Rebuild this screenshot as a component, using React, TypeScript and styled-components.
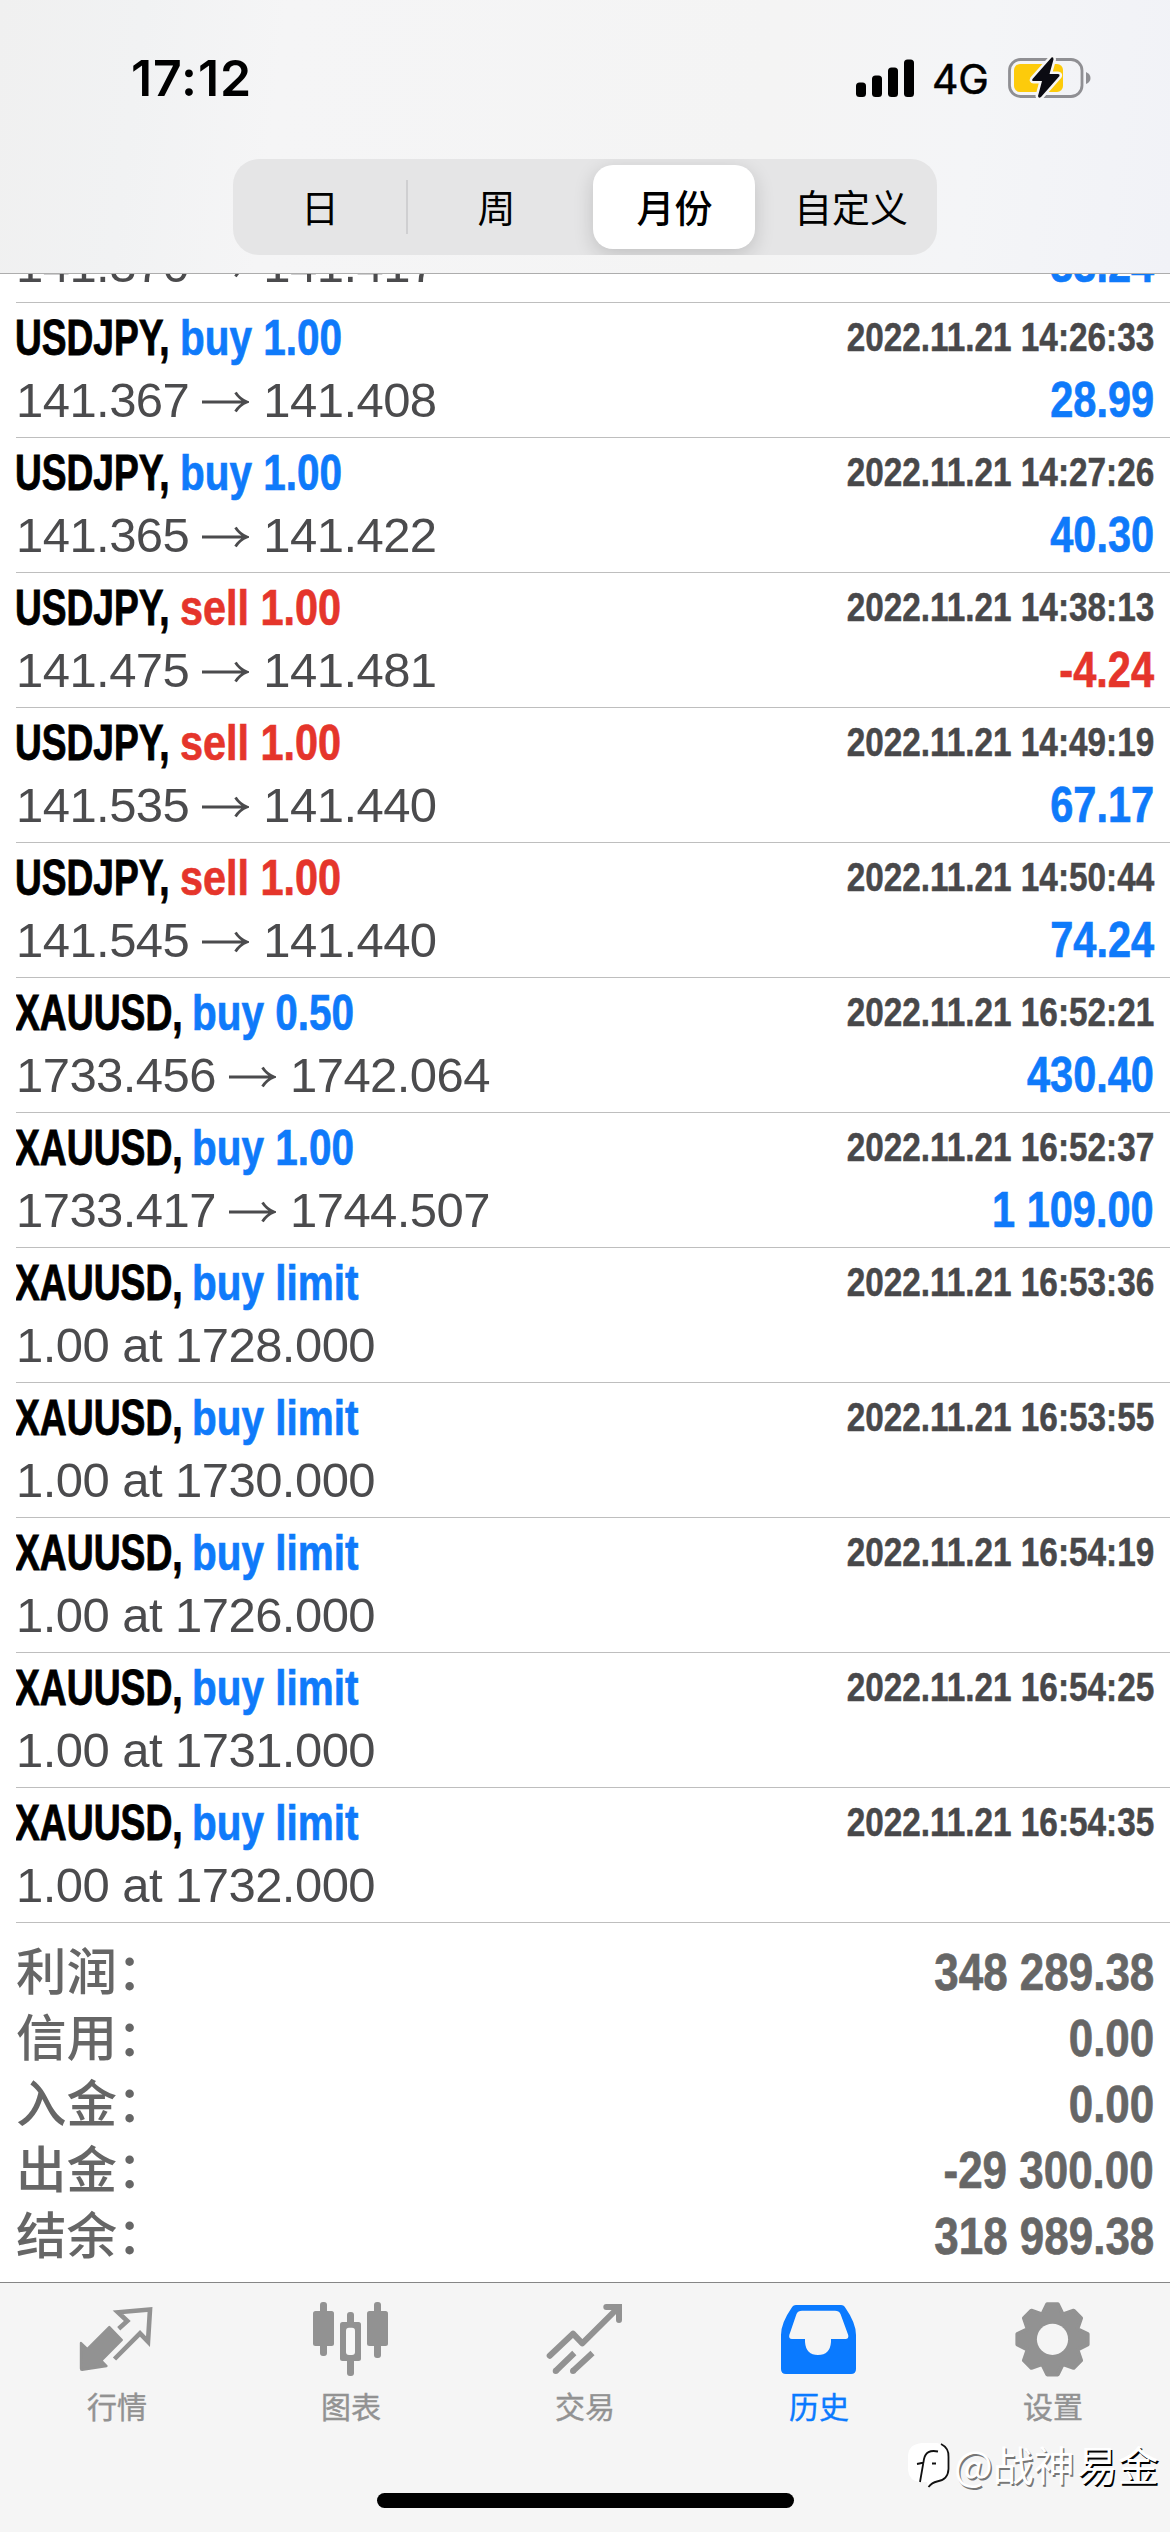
import React from "react";
import styled, { createGlobalStyle } from "styled-components";

const latin = `"Liberation Sans", "Noto Sans CJK SC", sans-serif`;
const cjk = `"Noto Sans CJK SC", sans-serif`;
const BLUE = "#0f7afa";
const RED = "#e5352b";

const Global = createGlobalStyle`
  * { box-sizing: border-box; }
  body { margin: 0; background: #fff; }
`;

const Screen = styled.div`
  position: relative;
  width: 1170px;
  height: 2532px;
  display: flex;
  flex-direction: column;
  overflow: hidden;
  background: #fff;
  font-family: ${latin};
`;

const Header = styled.header`
  flex: none;
  height: 274px;
  display: flex;
  flex-direction: column;
  align-items: center;
  background: linear-gradient(97deg, #f0f0f0 0%, #f1f2f3 12%, #f5f5f6 24%, #f4f4f4 65%, #f4f5f7 82%, #f1f2f7 100%);
  border-bottom: 1px solid #adadad;
`;

const StatusBar = styled.div`
  width: 100%;
  height: 159px;
  padding: 50px 78px 0 131px;
  display: flex;
  justify-content: space-between;
  align-items: flex-start;
`;

const Clock = styled.div`
  font: 600 50px/56px Inter, sans-serif;
  letter-spacing: 0.9px;
  color: #000;
`;

const StatusIcons = styled.div`
  display: flex;
  align-items: center;
  height: 56px;
`;

const Network = styled.span`
  width: 57px;
  margin: 1px 19px 0 18px;
  font: 400 41px/56px Inter, sans-serif;
  letter-spacing: -0.2px;
  -webkit-text-stroke: 0.5px #000;
`;

const Segmented = styled.nav`
  width: 704px;
  height: 96px;
  border-radius: 26px;
  display: grid;
  grid-template-columns: 175px 176px 180px 1fr;
  align-items: center;
  background: #e5e5e6;
  overflow: hidden;
`;

const Segment = styled.button<{ $active?: boolean; $divided?: boolean }>`
  height: ${(p) => (p.$active ? 84 : 54)}px;
  margin: 0 ${(p) => (p.$active ? 9 : 0)}px;
  padding: 0 0 3px 1px;
  border: 0;
  border-right: ${(p) => (p.$divided ? "2px solid #cfcfd1" : "0")};
  border-radius: ${(p) => (p.$active ? 20 : 0)}px;
  background: ${(p) => (p.$active ? "#fff" : "transparent")};
  box-shadow: ${(p) => (p.$active ? "0 6px 20px rgba(0,0,0,.16)" : "none")};
  font: ${(p) => (p.$active ? 500 : 400)} 38px/50px ${cjk};
  color: #000;
`;

const Content = styled.main`
  height: 2008px;
  flex: none;
  background: #fff;
`;

const Row = styled.article<{ $clipped?: boolean }>`
  height: ${(p) => (p.$clipped ? 28 : 135)}px;
  margin-left: 16px;
  padding: 0 16px 8px 0;
  border-top: ${(p) => (p.$clipped ? "0" : "1px solid #bebebe")};
  display: flex;
  flex-direction: column;
  justify-content: flex-end;
  overflow: hidden;
`;

const Line = styled.div<{ $h: number }>`
  flex: none;
  height: ${(p) => p.$h}px;
  line-height: ${(p) => p.$h}px;
  display: flex;
  justify-content: space-between;
  white-space: pre;
`;

const Title = styled.div`
  display: flex;
  font-weight: 700;
  font-size: 50px;
`;

const Symbol = styled.span<{ $w: number; $scale: number; $shift: number }>`
  width: ${(p) => p.$w}px;
  margin-left: ${(p) => p.$shift}px;
  transform: scaleX(${(p) => p.$scale});
  transform-origin: left;
  color: #000;
  -webkit-text-stroke: 0.9px #000;
`;

const Operation = styled.span<{ $color: string; $scale: number }>`
  transform: scaleX(${(p) => p.$scale});
  transform-origin: left;
  color: ${(p) => p.$color};
  -webkit-text-stroke: 0.7px ${(p) => p.$color};
`;

const Stamp = styled.time`
  font-weight: 700;
  font-size: 40px;
  line-height: 66px;
  transform: scaleX(0.833);
  transform-origin: right;
  color: #48484a;
  -webkit-text-stroke: 0.5px #48484a;
`;

const Price = styled.span`
  display: flex;
  align-items: center;
  font-size: 49px;
  letter-spacing: -0.55px;
  color: #4b4b4d;
`;

const Amount = styled.span<{ $color: string }>`
  font-weight: 700;
  font-size: 50px;
  transform: scaleX(0.83);
  transform-origin: right;
  color: ${(p) => p.$color};
  -webkit-text-stroke: 0.7px ${(p) => p.$color};
`;

const Summary = styled.section`
  margin-left: 16px;
  padding: 16px 16px 0 0;
  border-top: 1px solid #bebebe;
  color: #666;
`;

const SummaryLabel = styled.span`
  font: 500 50.5px/59px ${cjk};
`;

const SummaryValue = styled.span`
  font-weight: 700;
  font-size: 52px;
  transform: scaleX(0.845);
  transform-origin: right;
  -webkit-text-stroke: 0.7px #666;
`;

const TabBar = styled.footer`
  height: 250px;
  flex: none;
  border-top: 1px solid #868686;
  background: #f5f5f5;
  display: flex;
  flex-direction: column;
  align-items: center;
  justify-content: space-between;
  padding-bottom: 24px;
`;

const Tabs = styled.nav`
  width: 100%;
  display: grid;
  grid-template-columns: repeat(5, 1fr);
  padding-top: 13px;
`;

const Tab = styled.div<{ $active?: boolean }>`
  display: flex;
  flex-direction: column;
  align-items: center;
  color: ${(p) => (p.$active ? "#0a7aff" : "#929292")};
  font: 400 30px/42px ${cjk};
  -webkit-text-stroke: 0.4px currentColor;
`;

const TabIcon = styled.svg`
  width: 90px;
  height: 88px;
`;

const HomeIndicator = styled.div`
  width: 417px;
  height: 15px;
  border-radius: 8px;
  background: #000;
`;

const Watermark = styled.div`
  position: absolute;
  left: 906px;
  top: 2433px;
  display: flex;
  align-items: center;
  height: 60px;
  font: 400 41px/60px ${cjk};
  color: #fff;
  white-space: nowrap;
`;

const Handle = styled.span<{ $shadow: string }>`
  margin-left: ${(p) => (p.$shadow === "#000" ? 0 : -2)}px;
  margin-right: ${(p) => (p.$shadow === "#000" ? 0 : 2)}px;
  text-shadow: 1.5px 1.5px 0.5px ${(p) => p.$shadow};
`;

const ArrowSvg = styled.svg`
  width: 48px;
  height: 24px;
  margin: 3px 14px 0 12px;
`;

const Arrow = () => (
  <ArrowSvg viewBox="0 0 48 24" fill="none" stroke="#4b4b4d" strokeWidth="2.8">
    <path d="M1 12H46M34.500 2.500Q38.500 9 46 12Q38.500 15 34.500 21.500" />
  </ArrowSvg>
);

const Signal = () => (
  <svg width="58" height="38" viewBox="0 0 58 38">
    <rect x="0" y="23.500" width="10" height="14.500" rx="3.500" />
    <rect x="16" y="16.500" width="10" height="21.500" rx="3.500" />
    <rect x="32" y="8.500" width="10" height="29.500" rx="3.500" />
    <rect x="48" y="0.500" width="10" height="37.500" rx="3.500" />
  </svg>
);

const Battery = () => (
  <svg width="84" height="44" viewBox="0 0 84 44">
    <rect x="1.500" y="3.500" width="72.500" height="37" rx="11" fill="none" stroke="#8f8f93" strokeWidth="2.800" />
    <path d="M78 16Q82.500 18 82.500 22Q82.500 26 78 28Z" fill="#8f8f93" />
    <rect x="6" y="8" width="49" height="28" rx="6" fill="#fdcb0b" />
    <path
      d="M43.500 1.500L24.500 23Q23.500 25 25.500 25H34L30 40Q30.500 43 33 41L51.500 20Q52 18 50 18H41.500L45.500 3.500Q45.500 0.500 43.500 1.500Z"
      fill="#0b0b12"
      stroke="#f6f6f6"
      strokeWidth="5"
      paintOrder="stroke"
      strokeLinejoin="round"
    />
  </svg>
);

const QuotesIcon = () => (
  <TabIcon viewBox="0 0 90 88">
    <path
      d="M9 47L15.300 53L37.300 31L49.800 44L29.200 64.700L34.500 70L10 73.800Q9 73.800 9 72.500Z"
      fill="currentColor"
      stroke="currentColor"
      strokeWidth="2.400"
      strokeLinejoin="round"
    />
    <path d="M46.700 32.700L55.300 25L46 16.300L78 13.500L76 45.700L68 37.300L42.500 63" fill="none" stroke="currentColor" strokeWidth="4.600" />
  </TabIcon>
);

const ChartIcon = () => (
  <TabIcon viewBox="0 0 90 88" fill="currentColor">
    <rect x="14" y="6" width="7" height="54" rx="3" />
    <rect x="7" y="15" width="21" height="35" rx="2.500" />
    <rect x="41" y="16" width="7" height="64" rx="3" />
    <rect x="34" y="26" width="21" height="39" rx="2.500" />
    <rect x="40" y="31.700" width="9" height="27.300" rx="3" fill="#f8f8f8" />
    <rect x="68" y="6" width="7" height="56" rx="3" />
    <rect x="61" y="15" width="21" height="35" rx="2.500" />
  </TabIcon>
);

const TradeIcon = () => (
  <TabIcon viewBox="0 0 90 88" fill="none" stroke="currentColor" strokeWidth="6">
    <path d="M9.700 59.700L33 37.700L42.300 47.300L78.500 11.300M66.300 11H79V24" strokeLinecap="round" strokeLinejoin="round" />
    <path d="M76 8h6v6z" fill="currentColor" stroke="none" />
    <path d="M15.700 75L34.300 57M33 75L52.500 57" />
    <path d="M15.700 75h0.010M33 75h0.010" strokeLinecap="round" />
  </TabIcon>
);

const HistoryIcon = () => (
  <TabIcon viewBox="0 0 90 88">
    <path
      fill="currentColor"
      fillRule="evenodd"
      d="M22 9H67Q70 9 71.500 12Q82 27 82 39V73Q82 78 77 78H12Q7 78 7 73V39Q7 27 17.500 12Q19 9 22 9ZM28 14.700Q24 14.700 22.500 18L15.300 39Q14.500 43 18 43H31V46Q32 59 44 59Q56 59 57 46V43H71.500Q75 43 74.200 39L66.500 18Q65 14.700 61 14.700Z"
    />
  </TabIcon>
);

const gearPath = Array.from({ length: 8 })
  .flatMap((_, i) =>
    [
      [27.5, -21],
      [35.5, -8.5],
      [35.5, 8.5],
      [27.5, 21],
    ].map(([r, a]) => {
      const t = ((i * 45 + a) * Math.PI) / 180;
      return `${(44.5 + r * Math.sin(t)).toFixed(2)} ${(43.3 - r * Math.cos(t)).toFixed(2)}`;
    })
  )
  .join("L");

const SettingsIcon = () => (
  <TabIcon viewBox="0 0 90 88">
    <path d={`M${gearPath}Z`} fill="currentColor" stroke="currentColor" strokeWidth="4" strokeLinejoin="round" />
    <circle cx="44.500" cy="43.300" r="15.600" fill="#f5f5f5" />
  </TabIcon>
);

const WatermarkLogo = () => (
  <svg width="50" height="52" viewBox="0 0 50 52">
    <path d="M16 6H31Q43 8 43 20V32Q42 43 31 44Q26 45 22 50L21 45H14Q3 44 2 33V18Q3 7 16 6Z" fill="#fff" />
    <path d="M35 7Q43 11 42.500 20V32Q42 43 31 44.500Q26 45.500 22.500 50" fill="none" stroke="#111" strokeWidth="1.800" />
    <path d="M32 14.500Q20 12 18 22L14 45M11 27L18 25.500M26 26.500H30" fill="none" stroke="#111" strokeWidth="1.800" />
  </svg>
);

type Deal = { symbol: string; op: string; price?: [string, string]; order?: string; time: string; amount?: string };

const deals: Deal[] = [
  { symbol: "USDJPY", op: "buy 1.00", price: ["141.367", "141.408"], time: "2022.11.21 14:26:33", amount: "28.99" },
  { symbol: "USDJPY", op: "buy 1.00", price: ["141.365", "141.422"], time: "2022.11.21 14:27:26", amount: "40.30" },
  { symbol: "USDJPY", op: "sell 1.00", price: ["141.475", "141.481"], time: "2022.11.21 14:38:13", amount: "-4.24" },
  { symbol: "USDJPY", op: "sell 1.00", price: ["141.535", "141.440"], time: "2022.11.21 14:49:19", amount: "67.17" },
  { symbol: "USDJPY", op: "sell 1.00", price: ["141.545", "141.440"], time: "2022.11.21 14:50:44", amount: "74.24" },
  { symbol: "XAUUSD", op: "buy 0.50", price: ["1733.456", "1742.064"], time: "2022.11.21 16:52:21", amount: "430.40" },
  { symbol: "XAUUSD", op: "buy 1.00", price: ["1733.417", "1744.507"], time: "2022.11.21 16:52:37", amount: "1 109.00" },
  { symbol: "XAUUSD", op: "buy limit", order: "1.00 at 1728.000", time: "2022.11.21 16:53:36" },
  { symbol: "XAUUSD", op: "buy limit", order: "1.00 at 1730.000", time: "2022.11.21 16:53:55" },
  { symbol: "XAUUSD", op: "buy limit", order: "1.00 at 1726.000", time: "2022.11.21 16:54:19" },
  { symbol: "XAUUSD", op: "buy limit", order: "1.00 at 1731.000", time: "2022.11.21 16:54:25" },
  { symbol: "XAUUSD", op: "buy limit", order: "1.00 at 1732.000", time: "2022.11.21 16:54:35" },
];

const summary = [
  ["利润：", "348 289.38"],
  ["信用：", "0.00"],
  ["入金：", "0.00"],
  ["出金：", "-29 300.00"],
  ["结余：", "318 989.38"],
];

const symbolFit: Record<string, { w: number; scale: number; shift: number }> = {
  USDJPY: { w: 165, scale: 0.742, shift: -1 },
  XAUUSD: { w: 177, scale: 0.745, shift: -1 },
};

const opScale = (op: string) => (op.startsWith("sell") ? 0.828 : 0.81);

const PriceRange = ({ range }: { range: [string, string] }) => (
  <Price>
    {range[0]}
    <Arrow />
    {range[1]}
  </Price>
);

const DealRow = ({ deal }: { deal: Deal }) => {
  const fit = symbolFit[deal.symbol];
  return (
    <Row>
      <Line $h={68}>
        <Title>
          <Symbol $w={fit.w} $scale={fit.scale} $shift={fit.shift}>{deal.symbol},</Symbol>
          <Operation $color={deal.op.startsWith("sell") ? RED : BLUE} $scale={opScale(deal.op)}>{deal.op}</Operation>
        </Title>
        <Stamp>{deal.time}</Stamp>
      </Line>
      <Line $h={57}>
        {deal.price ? <PriceRange range={deal.price} /> : <Price>{deal.order}</Price>}
        {deal.amount && <Amount $color={deal.amount.startsWith("-") ? RED : BLUE}>{deal.amount}</Amount>}
      </Line>
    </Row>
  );
};

export default function App() {
  return (
    <Screen>
      <Global />
      <Header>
        <StatusBar>
          <Clock>17:12</Clock>
          <StatusIcons>
            <Signal />
            <Network>4G</Network>
            <Battery />
          </StatusIcons>
        </StatusBar>
        <Segmented>
          <Segment $divided>日</Segment>
          <Segment>周</Segment>
          <Segment $active>月份</Segment>
          <Segment>自定义</Segment>
        </Segmented>
      </Header>
      <Content>
        <Row $clipped>
          <Line $h={57}>
            <PriceRange range={["141.370", "141.417"]} />
            <Amount $color={BLUE}>33.24</Amount>
          </Line>
        </Row>
        {deals.map((d) => (
          <DealRow key={d.time} deal={d} />
        ))}
        <Summary>
          {summary.map(([label, value]) => (
            <Line key={label} $h={66}>
              <SummaryLabel>{label}</SummaryLabel>
              <SummaryValue>{value}</SummaryValue>
            </Line>
          ))}
        </Summary>
      </Content>
      <TabBar>
        <Tabs>
          <Tab><QuotesIcon />行情</Tab>
          <Tab><ChartIcon />图表</Tab>
          <Tab><TradeIcon />交易</Tab>
          <Tab $active><HistoryIcon />历史</Tab>
          <Tab><SettingsIcon />设置</Tab>
        </Tabs>
        <HomeIndicator />
      </TabBar>
      <Watermark>
        <WatermarkLogo />
        <Handle $shadow="#777">@战神</Handle>
        <Handle $shadow="#000">易金</Handle>
      </Watermark>
    </Screen>
  );
}
